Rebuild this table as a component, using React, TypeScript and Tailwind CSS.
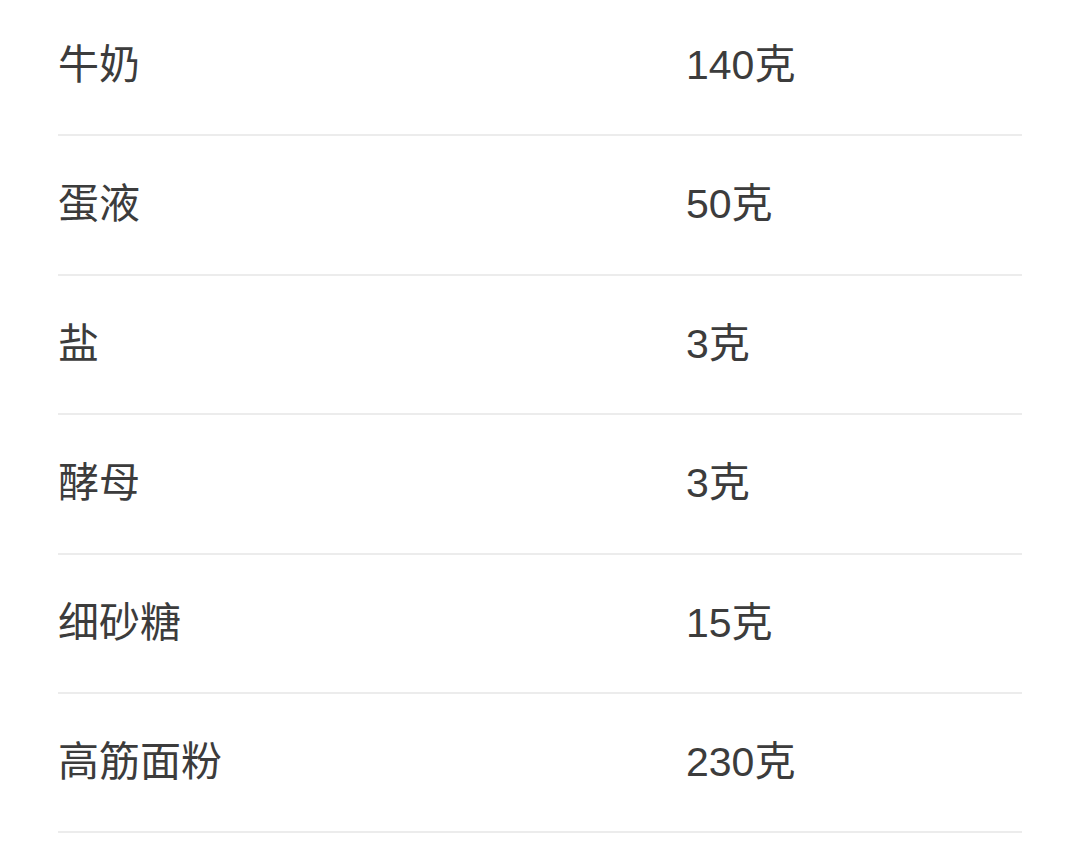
import React from "react";

type Item = {
  name: string;
  amount: string;
};

const items: Item[] = [
  { name: "牛奶", amount: "140克" },
  { name: "蛋液", amount: "50克" },
  { name: "盐", amount: "3克" },
  { name: "酵母", amount: "3克" },
  { name: "细砂糖", amount: "15克" },
  { name: "高筋面粉", amount: "230克" },
];

const App = () => {
  return (
    <div
      className="w-[1080px] h-[864px] bg-white overflow-hidden"
      style={{ fontFamily: '"Liberation Sans", "Noto Sans CJK SC", sans-serif' }}
    >
      <div className="ml-[58px] w-[964px] -mt-[3px]">
        {items.map((item) => (
          <div
            key={item.name}
            className="flex items-center h-[139.4px] border-b-2 border-[#ececec] text-[41px] text-[#3c3c3c]"
          >
            <div className="w-[628px] shrink-0">{item.name}</div>
            <div>{item.amount}</div>
          </div>
        ))}
      </div>
    </div>
  );
};

export default App;
